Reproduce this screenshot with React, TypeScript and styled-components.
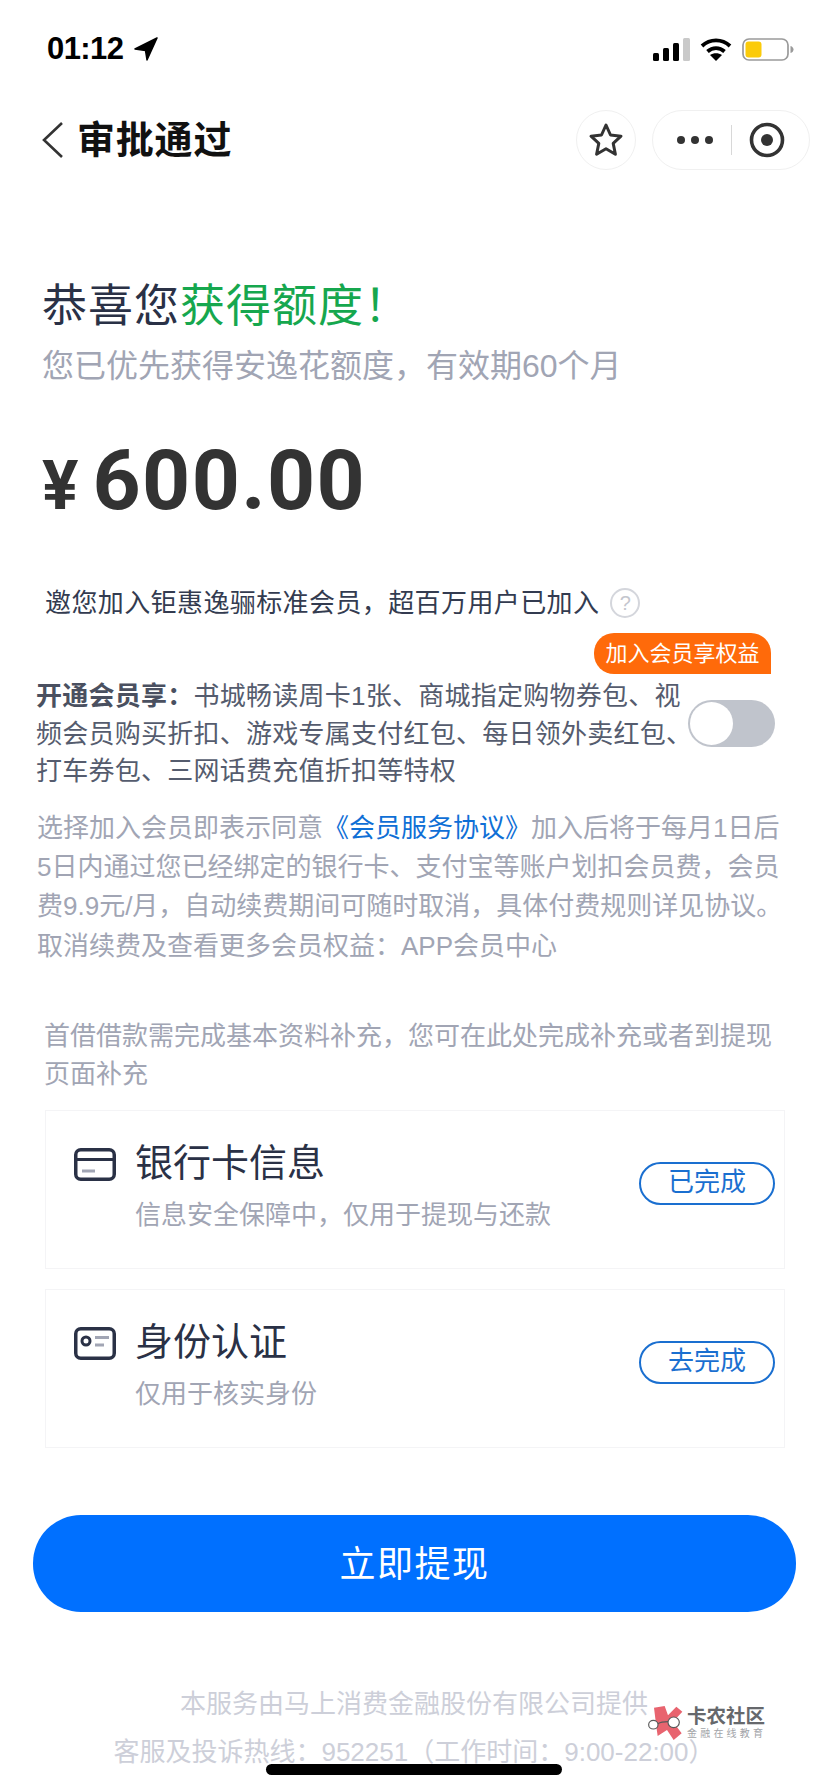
import React from "react";
import styled, { createGlobalStyle } from "styled-components";

const GlobalStyle = createGlobalStyle`
  html, body {
    margin: 0;
    padding: 0;
    background: #fff;
  }
  * {
    box-sizing: border-box;
  }
`;

const Page = styled.div`
  position: relative;
  width: 828px;
  height: 1792px;
  overflow: hidden;
  background: #fff;
  font-family: "Liberation Sans", "Noto Sans CJK SC", sans-serif;
`;

const StatusBar = styled.div`
  height: 96px;
  padding: 27px 34px 0 47px;
  display: flex;
  align-items: flex-start;
  justify-content: space-between;
`;

const Clock = styled.div`
  display: flex;
  align-items: center;
  gap: 11px;
  height: 44px;
  font-family: "Liberation Sans", sans-serif;
  font-size: 31px;
  font-weight: 700;
  letter-spacing: -0.6px;
  color: #000;
`;

const StatusIcons = styled.div`
  display: flex;
  align-items: center;
  gap: 10px;
  height: 44px;
`;

const NavBar = styled.div`
  height: 88px;
  padding: 0 18px 0 41px;
  display: flex;
  align-items: center;
`;

const NavTitle = styled.div`
  flex: 1;
  margin: 0 0 8px 13px;
  font-size: 38px;
  letter-spacing: 0.8px;
  font-weight: 700;
  color: #111;
`;

const RoundButton = styled.div`
  width: 60px;
  height: 60px;
  border: 1px solid #f0f0f0;
  border-radius: 30px;
  display: flex;
  align-items: center;
  justify-content: center;
  margin-right: 16px;
`;

const Capsule = styled.div`
  width: 158px;
  height: 60px;
  border: 1px solid #f0f0f0;
  border-radius: 30px;
  display: flex;
  align-items: center;
  justify-content: space-between;
  padding: 0 24px 0 23px;
`;

const CapsuleDivider = styled.div`
  width: 1px;
  height: 30px;
  background: #d8d8d8;
`;

const Greeting = styled.h1`
  margin: 94px 0 0 42px;
  font-size: 45px;
  line-height: 58px;
  font-weight: 400;
  color: #2a3146;
  letter-spacing: 1px;
`;

const GreenText = styled.span`
  color: #16a74e;
`;

const SubTitle = styled.div`
  margin: 8px 0 0 42px;
  font-size: 32px;
  line-height: 44px;
  color: #a1a5b4;
`;

const Amount = styled.div`
  margin: 39px 0 0 42px;
  display: flex;
  align-items: baseline;
  height: 105px;
  font-family: Roboto, "Liberation Sans", sans-serif;
  font-weight: 700;
  color: #333;
`;

const Currency = styled.span`
  font-size: 68px;
  margin-right: 14px;
`;

const Digits = styled.span`
  font-size: 84px;
  letter-spacing: 1.4px;
  line-height: 107px;
`;

const InviteRow = styled.div`
  margin: 51px 0 0 45px;
  display: flex;
  align-items: center;
  gap: 11px;
  font-size: 26px;
  line-height: 40px;
  letter-spacing: 0.4px;
  color: #333b50;
`;

const HelpIcon = styled.div`
  width: 30px;
  height: 30px;
  border: 2px solid #d4d6dc;
  border-radius: 50%;
  display: flex;
  align-items: center;
  justify-content: center;
  font-size: 20px;
  color: #c4c6ce;
`;

const BenefitBlock = styled.div`
  position: relative;
  margin: 55px 0 0 36px;
  width: 662px;
  font-size: 26px;
  letter-spacing: 0.25px;
  line-height: 37.5px;
  color: #555c6e;
`;

const BenefitLead = styled.strong`
  font-weight: 700;
  color: #4a5060;
`;

const BenefitTag = styled.div`
  position: absolute;
  top: -45px;
  left: 558px;
  width: 177px;
  height: 41px;
  border-radius: 20px 20px 0 20px;
  background: #ff6a0a;
  color: #fff;
  font-size: 22px;
  letter-spacing: 0;
  line-height: 41px;
  text-align: center;
`;

const Toggle = styled.div`
  position: absolute;
  top: 22px;
  left: 652px;
  width: 87px;
  height: 47px;
  border-radius: 24px;
  background: #c0c4cc;
  padding: 2px;
`;

const ToggleKnob = styled.div`
  width: 43px;
  height: 43px;
  border-radius: 50%;
  background: #fff;
`;

const TermsBlock = styled.div`
  margin: 18px 0 0 37px;
  width: 748px;
  font-size: 26px;
  line-height: 39.4px;
  color: #a1a5b4;
`;

const AgreementLink = styled.span`
  color: #0f6fd6;
`;

const Note = styled.div`
  margin: 51px 0 0 44px;
  width: 740px;
  font-size: 26px;
  line-height: 38px;
  color: #a1a5b4;
`;

const CardList = styled.div`
  margin: 17px 0 0 45px;
  width: 740px;
  display: flex;
  flex-direction: column;
  gap: 20px;
`;

const Card = styled.div`
  height: 159px;
  border: 1px solid #f4f4f6;
  padding: 0 9px 12px 28px;
  display: flex;
  align-items: center;
`;

const CardIcon = styled.div`
  width: 42px;
  align-self: flex-start;
  margin-top: 37px;
  line-height: 0;
`;

const CardText = styled.div`
  flex: 1;
  align-self: flex-start;
  margin: 27px 0 0 19px;
`;

const CardTitle = styled.div`
  font-size: 38px;
  line-height: 50px;
  color: #2a3146;
`;

const CardSub = styled.div`
  margin-top: 9px;
  font-size: 26px;
  line-height: 36px;
  color: #a1a5b4;
`;

const PillButton = styled.div`
  width: 136px;
  height: 43px;
  border: 2px solid #1a6fd0;
  border-radius: 22px;
  color: #1a6fd0;
  font-size: 26px;
  line-height: 37px;
  text-align: center;
`;

const PrimaryButton = styled.div`
  margin: 67px 0 0 33px;
  width: 763px;
  height: 97px;
  border-radius: 48px;
  background: #0070ff;
  color: #fff;
  font-size: 36px;
  letter-spacing: 1.5px;
  line-height: 99px;
  text-align: center;
`;

const Footer = styled.div`
  margin-top: 68px;
  text-align: center;
  font-size: 26px;
  line-height: 48px;
  color: #cdcfd9;
`;

const HomeIndicator = styled.div`
  position: absolute;
  left: 266px;
  top: 1764px;
  width: 296px;
  height: 11px;
  border-radius: 6px;
  background: #000;
`;

const Watermark = styled.div`
  position: absolute;
  left: 648px;
  top: 1705px;
  display: flex;
  align-items: flex-start;
  gap: 4px;
`;

const WatermarkName = styled.div`
  font-size: 19.5px;
  line-height: 22px;
  font-weight: 700;
  color: #66686c;
`;

const WatermarkTagline = styled.div`
  margin-top: 1px;
  font-size: 10px;
  line-height: 12px;
  letter-spacing: 3.2px;
  white-space: nowrap;
  color: #a2a4a8;
`;

const LocationIcon = () => (
  <svg width="24" height="24" viewBox="0 0 24 24">
    <path d="M23 1 1 12l10.500 1.500L13 23z" fill="#000" stroke="#000" strokeWidth="1.500" strokeLinejoin="round" />
  </svg>
);

const SignalIcon = () => (
  <svg width="37" height="23" viewBox="0 0 37 23">
    <rect x="0" y="15" width="6" height="8" rx="1.500" fill="#000" />
    <rect x="10" y="10" width="6" height="13" rx="1.500" fill="#000" />
    <rect x="20" y="5" width="6" height="18" rx="1.500" fill="#000" />
    <rect x="30" y="0" width="7" height="23" rx="1.500" fill="#c9c9c9" />
  </svg>
);

const WifiIcon = () => (
  <svg width="32" height="23" viewBox="0 0 32 23" fill="none" stroke="#000" strokeWidth="3.800">
    <path d="M2 8C10 .5 22 .5 30 8" />
    <path d="M7.500 13.500c5-4.500 12-4.500 17 0" />
    <path d="M16 23l-6-6c3.500-2.500 8.500-2.500 12 0z" fill="#000" stroke="none" />
  </svg>
);

const BatteryIcon = () => (
  <svg width="52" height="23" viewBox="0 0 52 23">
    <rect x="1" y="1" width="45" height="21" rx="6" fill="none" stroke="#9a9a9a" strokeWidth="1.700" />
    <rect x="3.500" y="3.500" width="16" height="16" rx="3" fill="#fbcb0a" />
    <path d="M48.500 8c2 .5 3 2 3 3.500s-1 3-3 3.500z" fill="#9a9a9a" />
  </svg>
);

const BackIcon = () => (
  <svg width="23" height="38" viewBox="0 0 23 38" fill="none" stroke="#333" strokeWidth="2.600">
    <path d="M21 2 3 19l18 17" />
  </svg>
);

const StarIcon = () => (
  <svg width="36" height="36" viewBox="0 0 36 36" fill="none" stroke="#333" strokeWidth="3" strokeLinejoin="round">
    <path d="M18 3l4.500 10 10.500 1.200-7.800 7.200 2.200 10.800L18 26.800 8.600 32.200l2.200-10.800L3 14.200 13.500 13z" />
  </svg>
);

const MoreIcon = () => (
  <svg width="38" height="10" viewBox="0 0 38 10" fill="#333">
    <circle cx="5" cy="5" r="4" />
    <circle cx="19" cy="5" r="4" />
    <circle cx="33" cy="5" r="4" />
  </svg>
);

const TargetIcon = () => (
  <svg width="36" height="36" viewBox="0 0 36 36">
    <circle cx="18" cy="18" r="15.500" fill="none" stroke="#333" strokeWidth="3.600" />
    <circle cx="18" cy="18" r="6" fill="#333" />
  </svg>
);

const BankCardIcon = () => (
  <svg width="42" height="33" viewBox="0 0 42 33" fill="none">
    <rect x="1.750" y="1.750" width="38.500" height="29.500" rx="5" stroke="#2a3146" strokeWidth="3.500" />
    <path d="M2 11.500h38" stroke="#2a3146" strokeWidth="3" />
    <path d="M8 23h13" stroke="#a1a5b4" strokeWidth="3" />
  </svg>
);

const IdCardIcon = () => (
  <svg width="42" height="33" viewBox="0 0 42 33" fill="none">
    <rect x="1.750" y="1.750" width="38.500" height="29.500" rx="5" stroke="#2a3146" strokeWidth="3.500" />
    <circle cx="12" cy="14" r="4" stroke="#2a3146" strokeWidth="3" />
    <path d="M21 10.500h14M21 18h9" stroke="#a1a5b4" strokeWidth="3" />
  </svg>
);

const WatermarkLogo = () => (
  <svg width="35" height="35" viewBox="0 0 105 105">
    <path d="M18 8 50 3l10 28L85 5l18 15-28 30 26 35-24 20-20-30-28 18-4-28z" fill="#e8646f" />
    <g fill="#fff" stroke="#5a5a5a" strokeWidth="3.500">
      <ellipse cx="16" cy="59" rx="14" ry="13" />
      <ellipse cx="77" cy="52" rx="17" ry="16" />
      <path d="M30 56c8-5 20-6 30-6" fill="none" />
    </g>
  </svg>
);

function App() {
  return (
    <Page>
      <GlobalStyle />
      <StatusBar>
        <Clock>
          01:12
          <LocationIcon />
        </Clock>
        <StatusIcons>
          <SignalIcon />
          <WifiIcon />
          <BatteryIcon />
        </StatusIcons>
      </StatusBar>
      <NavBar>
        <BackIcon />
        <NavTitle>审批通过</NavTitle>
        <RoundButton>
          <StarIcon />
        </RoundButton>
        <Capsule>
          <MoreIcon />
          <CapsuleDivider />
          <TargetIcon />
        </Capsule>
      </NavBar>
      <Greeting>
        恭喜您<GreenText>获得额度！</GreenText>
      </Greeting>
      <SubTitle>您已优先获得安逸花额度，有效期60个月</SubTitle>
      <Amount>
        <Currency>¥</Currency>
        <Digits>600.00</Digits>
      </Amount>
      <InviteRow>
        邀您加入钜惠逸骊标准会员，超百万用户已加入
        <HelpIcon>?</HelpIcon>
      </InviteRow>
      <BenefitBlock>
        <BenefitTag>加入会员享权益</BenefitTag>
        <BenefitLead>开通会员享：</BenefitLead>
        书城畅读周卡1张、商城指定购物券包、视频会员购买折扣、游戏专属支付红包、每日领外卖红包、打车券包、三网话费充值折扣等特权
        <Toggle>
          <ToggleKnob />
        </Toggle>
      </BenefitBlock>
      <TermsBlock>
        选择加入会员即表示同意<AgreementLink>《会员服务协议》</AgreementLink>
        加入后将于每月1日后5日内通过您已经绑定的银行卡、支付宝等账户划扣会员费，会员费9.9元/月，自动续费期间可随时取消，具体付费规则详见协议。取消续费及查看更多会员权益：APP会员中心
      </TermsBlock>
      <Note>首借借款需完成基本资料补充，您可在此处完成补充或者到提现页面补充</Note>
      <CardList>
        <Card>
          <CardIcon>
            <BankCardIcon />
          </CardIcon>
          <CardText>
            <CardTitle>银行卡信息</CardTitle>
            <CardSub>信息安全保障中，仅用于提现与还款</CardSub>
          </CardText>
          <PillButton>已完成</PillButton>
        </Card>
        <Card>
          <CardIcon>
            <IdCardIcon />
          </CardIcon>
          <CardText>
            <CardTitle>身份认证</CardTitle>
            <CardSub>仅用于核实身份</CardSub>
          </CardText>
          <PillButton>去完成</PillButton>
        </Card>
      </CardList>
      <PrimaryButton>立即提现</PrimaryButton>
      <Footer>
        本服务由马上消费金融股份有限公司提供
        <br />
        客服及投诉热线：952251（工作时间：9:00-22:00）
      </Footer>
      <Watermark>
        <WatermarkLogo />
        <div>
          <WatermarkName>卡农社区</WatermarkName>
          <WatermarkTagline>金融在线教育</WatermarkTagline>
        </div>
      </Watermark>
      <HomeIndicator />
    </Page>
  );
}

export default App;
